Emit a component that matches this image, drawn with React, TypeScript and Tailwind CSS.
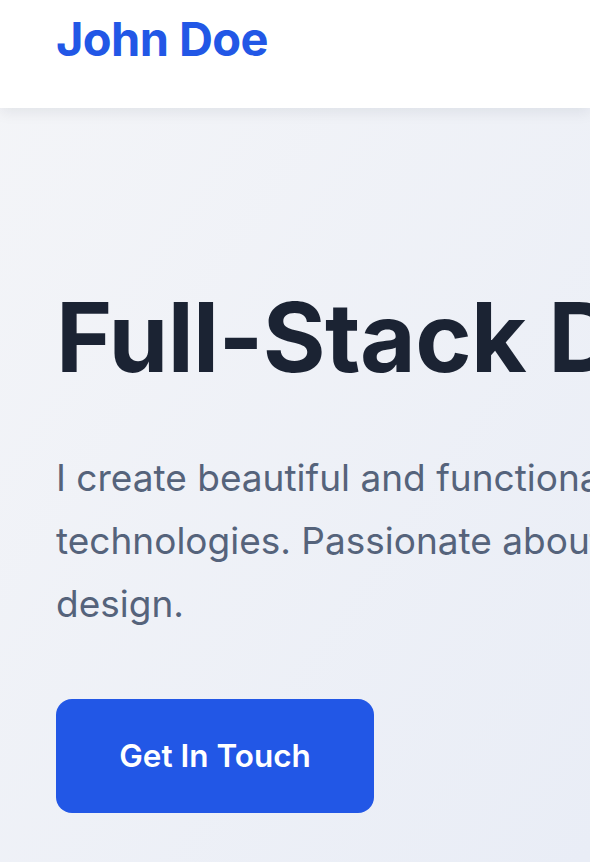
const Header = () => (
    <header className="relative z-10 h-[108px] bg-white shadow-[0_4px_14px_rgba(15,23,42,0.08)]">
        <div className="w-[1280px] px-[56px] pt-[15px]">
            <a href="#" className="text-[47px] leading-[48px] font-bold text-[#2257e6] tracking-[-0.6px]">
                John Doe
            </a>
        </div>
    </header>
);

const Hero = () => (
    <section className="w-[1280px] px-[56px] pt-[181px] pb-[48px]">
        <h1 className="text-[96px] leading-[96px] font-bold text-[#1b2333] tracking-[-0.6px] whitespace-nowrap">
            Full-Stack Developer
        </h1>
        <p className="mt-[61px] text-[37px] leading-[63px] text-[#55637b]">
            I create beautiful and functional web applications with modern
            <br />
            technologies. Passionate about clean code and user-centered
            <br />
            design.
        </p>
        <button className="mt-[64px] h-[114px] w-[318px] rounded-[16px] bg-[#2257e6] text-white text-[31.5px] font-semibold hover:bg-[#1d4ed8]">
            Get In Touch
        </button>
    </section>
);

export default function App() {
    return (
        <div
            className="min-h-screen w-full overflow-hidden bg-gradient-to-br from-[#f4f5f8] to-[#e9edf6]"
            style={{ fontFamily: 'Inter, "Noto Sans", sans-serif' }}
        >
            <Header />
            <Hero />
        </div>
    );
}
